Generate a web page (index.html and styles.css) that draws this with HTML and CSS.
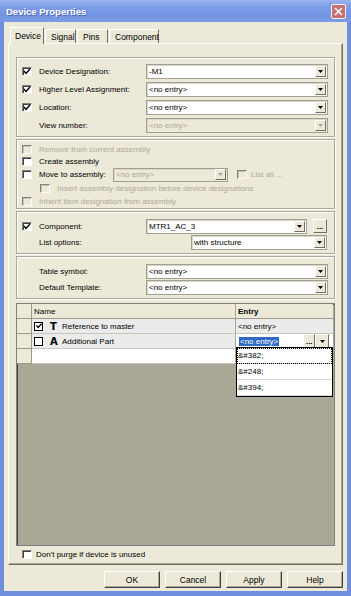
FILE: index.html
```html
<!DOCTYPE html>
<html lang="en">
<head>
  <meta charset="UTF-8">
  <title>Device Properties</title>
  <link rel="stylesheet" href="styles.css">
</head>
<body>
  <div class="window">
    <div class="titlebar">
      <span class="title">Device Properties</span>
      <span class="close">
        <svg width="9" height="9" viewBox="0 0 9 9"><path d="M1 1 L8 8 M8 1 L1 8" stroke="#fff" stroke-width="1.6" fill="none"/></svg>
      </span>
    </div>

    <div class="client">
      <div class="tabs">
        <div class="tab active">Device</div>
        <div class="tab">Signal</div>
        <div class="tab">Pins</div>
        <div class="tab">Component</div>
      </div>

      <div class="page">
        <!-- designation -->
        <div class="group g1">
          <div class="row r18">
            <span class="check on"></span><span class="label">Device Designation:</span>
            <div class="combo w182"><span class="val">-M1</span><span class="drop"></span></div>
          </div>
          <div class="row r18">
            <span class="check on"></span><span class="label">Higher Level Assignment:</span>
            <div class="combo w182"><span class="val">&lt;no entry&gt;</span><span class="drop"></span></div>
          </div>
          <div class="row r18">
            <span class="check on"></span><span class="label">Location:</span>
            <div class="combo w182"><span class="val">&lt;no entry&gt;</span><span class="drop"></span></div>
          </div>
          <div class="row r18">
            <span class="check blank"></span><span class="label">View number:</span>
            <div class="combo w182 disabled"><span class="val">&lt;no entry&gt;</span><span class="drop"></span></div>
          </div>
        </div>

        <!-- assembly -->
        <div class="group g2">
          <div class="row r12 off">
            <span class="check dis"></span><span>Remove from current assembly</span>
          </div>
          <div class="row r12">
            <span class="check"></span><span>Create assembly</span>
          </div>
          <div class="row r15">
            <span class="check"></span><span class="label short">Move to assembly:</span>
            <div class="combo w115 disabled"><span class="val">&lt;no entry&gt;</span><span class="drop"></span></div>
            <span class="check dis listall"></span><span class="muted">List all ...</span>
          </div>
          <div class="row r13 off indent">
            <span class="check dis"></span><span>Insert assembly designation before device designations</span>
          </div>
          <div class="row r13 off">
            <span class="check dis"></span><span>Inherit item designation from assembly</span>
          </div>
        </div>

        <!-- component -->
        <div class="group g3">
          <div class="row r16">
            <span class="check on"></span><span class="label">Component:</span>
            <div class="combo w161"><span class="val">MTR1_AC_3</span><span class="drop"></span></div>
            <span class="btn-dots">...</span>
          </div>
          <div class="row r16">
            <span class="check blank"></span><span class="label wide">List options:</span>
            <div class="combo w136"><span class="val">with structure</span><span class="drop"></span></div>
          </div>
        </div>

        <!-- templates -->
        <div class="group g4">
          <div class="row r16">
            <span class="check blank"></span><span class="label">Table symbol:</span>
            <div class="combo w182"><span class="val">&lt;no entry&gt;</span><span class="drop"></span></div>
          </div>
          <div class="row r16">
            <span class="check blank"></span><span class="label">Default Template:</span>
            <div class="combo w182"><span class="val">&lt;no entry&gt;</span><span class="drop"></span></div>
          </div>
        </div>

        <!-- property grid -->
        <div class="grid">
          <div class="grow head">
            <span class="rh"></span>
            <span class="c-name">Name</span>
            <span class="c-entry bold">Entry</span>
          </div>
          <div class="grow shade">
            <span class="rh"></span>
            <span class="c-name">
              <span class="gcheck on"></span><span class="glyph">T</span>Reference to master
            </span>
            <span class="c-entry">&lt;no entry&gt;</span>
          </div>
          <div class="grow shade">
            <span class="rh"></span>
            <span class="c-name">
              <span class="gcheck"></span><span class="glyph">A</span>Additional Part
            </span>
            <span class="c-entry editor">
              <span class="sel">&lt;no entry&gt;</span>
              <span class="btn-dots small">...</span>
              <span class="drop"></span>
            </span>
          </div>
          <div class="grow white">
            <span class="rh"></span>
            <span class="c-name"></span>
            <span class="c-entry"></span>
          </div>

          <ul class="droplist">
            <li class="focus">&amp;#382;</li>
            <li>&amp;#248;</li>
            <li>&amp;#394;</li>
          </ul>
        </div>

        <div class="purge">
          <span class="check"></span><span>Don't purge if device is unused</span>
        </div>
      </div>

      <div class="buttons">
        <span class="button">OK</span>
        <span class="button">Cancel</span>
        <span class="button">Apply</span>
        <span class="button">Help</span>
      </div>
    </div>
  </div>
</body>
</html>
```

FILE: styles.css
```css
body {
  margin: 0;
  font-family: 'Liberation Sans', Arial, sans-serif;
  font-size: 8px;
  color: #000000;
  background: #ece9d8;
}

.window {
  width: 351px;
  height: 596px;
  box-sizing: border-box;
  display: flex;
  flex-direction: column;
  background: #ece9d8;
  border-left: 4px solid #6f8edd;
  border-right: 4px solid #6f8edd;
  border-bottom: 5px solid #6f8edd;
}

.titlebar {
  height: 22px;
  margin: 0 -4px;
  padding: 0 5px 0 6px;
  display: flex;
  align-items: center;
  justify-content: space-between;
  background: linear-gradient(180deg, #9bb4ee 0%, #7e9de6 30%, #7394e2 70%, #7e9ce5 100%);
}

.title {
  color: #ffffff;
  font-weight: bold;
  font-size: 9.5px;
  text-shadow: 1px 1px 0 #4d69b8;
}

.close {
  width: 15px;
  height: 15px;
  box-sizing: border-box;
  display: flex;
  align-items: center;
  justify-content: center;
  background: #c86f73;
  border: 1px solid #f1f1f1;
  border-radius: 2px;
  margin-top: 1px;
}

.client {
  flex: 1;
  display: flex;
  flex-direction: column;
  padding: 5px 4px 0 4px;
}

/* tabs */
.tabs {
  display: flex;
  align-items: flex-end;
  height: 16px;
  margin-left: 2px;
}

.tab {
  height: 14px;
  box-sizing: border-box;
  padding: 0 5px;
  display: flex;
  align-items: center;
  border-left: 1px solid #ffffff;
  border-top: 1px solid #ffffff;
  border-right: 1px solid #716f64;
  margin-right: 1px;
  font-size: 8.5px;
}

.tab.active {
  height: 17px;
  margin-bottom: -1px;
  background: #ece9d8;
  position: relative;
  z-index: 1;
  padding: 0 6px 0 4px;
  border-right: 1px solid #716f64;
}

.tab:nth-child(2) { width: 31px; }
.tab:nth-child(3) { width: 31px; }
.tab:nth-child(4) { width: 50px; }
.tab.active { width: 34px; }

.page {
  height: 522px;
  box-sizing: border-box;
  border-top: 1px solid #ffffff;
  border-left: 1px solid #ffffff;
  border-right: 1px solid #716f64;
  border-bottom: 1px solid #716f64;
  box-shadow: inset -1px -1px 0 #aca899;
  padding: 13px 7px 0 7px;
  display: flex;
  flex-direction: column;
}

/* groups */
.group {
  box-sizing: border-box;
  border: 1px solid #aca899;
  box-shadow: inset 1px 1px 0 #ffffff, 1px 1px 0 #ffffff;
  margin-bottom: 2px;
  padding-left: 5px;
}

.g1 { height: 80px; padding-top: 4px; }
.g2 { height: 70px; padding-top: 3px; }
.g3 { height: 43px; padding-top: 6px; }
.g4 { height: 43px; padding-top: 6px; }

.row {
  display: flex;
  align-items: center;
}

.r18 { height: 18px; }
.r16 { height: 16px; }
.r15 { height: 15px; }
.r13 { height: 13px; }
.r12 { height: 12px; }

.off { color: #aca899; }
.muted { color: #aca899; }
.indent { padding-left: 18px; }

.label {
  width: 107px;
  flex: none;
}

.label.short { width: 74px; }
.label.wide { width: 152px; }

.check {
  width: 10px;
  height: 9px;
  box-sizing: border-box;
  flex: none;
  margin-right: 7px;
  background: #ffffff;
  border-top: 1px solid #808080;
  border-left: 1px solid #808080;
  border-right: 1px solid #ffffff;
  border-bottom: 1px solid #ffffff;
  box-shadow: inset 1px 1px 0 #404040;
}

.check.on {
  background: #ffffff url("data:image/svg+xml,%3Csvg xmlns='http://www.w3.org/2000/svg' width='8' height='7'%3E%3Cpath d='M1 3 L3 5.5 L7 1' stroke='%23000' stroke-width='1.4' fill='none'/%3E%3C/svg%3E") center no-repeat;
}

.check.dis {
  background: #ece9d8;
  box-shadow: inset 1px 1px 0 #c8c5b5;
}

.check.blank {
  visibility: hidden;
}

.check.listall {
  margin-left: 9px;
  margin-right: 4px;
}

/* combo boxes */
.combo {
  height: 15px;
  box-sizing: border-box;
  display: flex;
  align-items: center;
  background: #ffffff;
  border: 1px solid #a19f92;
  box-shadow: inset 1px 1px 0 #d9d6c7;
  padding: 0 1px 0 2px;
}

.w182 { width: 182px; }
.w161 { width: 161px; }
.w136 { width: 136px; }
.w115 { width: 115px; height: 14px; }

.combo .val {
  flex: 1;
  white-space: nowrap;
  overflow: hidden;
}

.drop {
  width: 11px;
  height: 11px;
  box-sizing: border-box;
  flex: none;
  background: #ece9d8 url("data:image/svg+xml,%3Csvg xmlns='http://www.w3.org/2000/svg' width='5' height='3'%3E%3Cpath d='M0 0 H5 L2.5 3 Z' fill='%23000'/%3E%3C/svg%3E") center no-repeat;
  border-top: 1px solid #ffffff;
  border-left: 1px solid #ffffff;
  border-right: 1px solid #716f64;
  border-bottom: 1px solid #716f64;
}

.combo.disabled {
  background: #ece9d8;
  color: #aca899;
}

.combo.disabled .drop {
  background-image: url("data:image/svg+xml,%3Csvg xmlns='http://www.w3.org/2000/svg' width='5' height='3'%3E%3Cpath d='M0 0 H5 L2.5 3 Z' fill='%23aca899'/%3E%3C/svg%3E");
}

.btn-dots {
  width: 14px;
  height: 14px;
  box-sizing: border-box;
  margin-left: 6px;
  display: flex;
  align-items: flex-end;
  justify-content: center;
  line-height: 10px;
  font-weight: bold;
  background: #ece9d8;
  border-top: 1px solid #ffffff;
  border-left: 1px solid #ffffff;
  border-right: 1px solid #716f64;
  border-bottom: 1px solid #716f64;
}

/* property grid */
.grid {
  position: relative;
  height: 243px;
  box-sizing: border-box;
  margin-top: 2px;
  background: #aba796;
  border: 1px solid #808080;
  box-shadow: inset 1px 1px 0 #404040;
}

.grow {
  display: flex;
  height: 15px;
  box-sizing: border-box;
}

.rh {
  width: 15px;
  flex: none;
  box-sizing: border-box;
  background: #ece9d8;
  border-right: 1px solid #9d9a8a;
  border-bottom: 1px solid #9d9a8a;
}

.c-name {
  width: 204px;
  flex: none;
  box-sizing: border-box;
  display: flex;
  align-items: center;
  padding-left: 2px;
  border-right: 1px solid #aca899;
  border-bottom: 1px solid #c9c6b8;
}

.c-entry {
  width: 97px;
  flex: none;
  box-sizing: border-box;
  display: flex;
  align-items: center;
  padding-left: 2px;
  border-bottom: 1px solid #c9c6b8;
}

.head .c-name,
.head .c-entry {
  background: #ece9d8;
  border-bottom: 1px solid #9d9a8a;
}

.bold { font-weight: bold; }

.shade .c-name,
.shade .c-entry {
  background: #ebebeb;
}

.white .c-name,
.white .c-entry {
  background: #ffffff;
}

.gcheck {
  width: 9px;
  height: 9px;
  box-sizing: border-box;
  border: 1.5px solid #000000;
  background: #ffffff;
  margin-right: 7px;
}

.gcheck.on {
  background: #ffffff url("data:image/svg+xml,%3Csvg xmlns='http://www.w3.org/2000/svg' width='6' height='6'%3E%3Cpath d='M0.5 2.5 L2.2 4.5 L5.5 0.8' stroke='%23000' stroke-width='1.4' fill='none'/%3E%3C/svg%3E") center no-repeat;
}

.glyph {
  width: 12px;
  font-weight: bold;
  font-size: 10px;
  font-family: 'DejaVu Sans', sans-serif;
}

.editor {
  background: #ffffff !important;
  padding-left: 3px;
  padding-right: 0;
}

.editor .sel {
  background: #316ac5;
  color: #ffffff;
  padding: 0 1px;
  margin-right: 24px;
  white-space: nowrap;
}

.btn-dots.small {
  width: 12px;
  height: 14px;
  margin-left: 0;
}

.editor .drop {
  width: 14px;
  height: 14px;
}

.droplist {
  position: absolute;
  left: 219px;
  top: 43px;
  width: 97px;
  margin: 0;
  padding: 0;
  list-style: none;
  background: #ffffff;
  border: 1px solid #000000;
  box-sizing: border-box;
}

.droplist li {
  height: 15px;
  line-height: 15px;
  padding-left: 1px;
  border-bottom: 1px solid #d8d8d8;
}

.droplist li.focus {
  outline: 1px dotted #000000;
  outline-offset: -1px;
}

.purge {
  display: flex;
  align-items: center;
  height: 13px;
  margin-top: 2px;
  padding-left: 6px;
}

.purge .check {
  margin-right: 4px;
}

/* dialog buttons */
.buttons {
  display: flex;
  justify-content: flex-end;
  gap: 5px;
  margin-top: 6px;
  padding-right: 0;
}

.button {
  width: 56px;
  height: 17px;
  box-sizing: border-box;
  display: flex;
  align-items: center;
  justify-content: center;
  font-size: 8.5px;
  background: #ece9d8;
  border-top: 1px solid #ffffff;
  border-left: 1px solid #ffffff;
  border-right: 1px solid #404040;
  border-bottom: 1px solid #404040;
  box-shadow: inset -1px -1px 0 #aca899;
}
```
